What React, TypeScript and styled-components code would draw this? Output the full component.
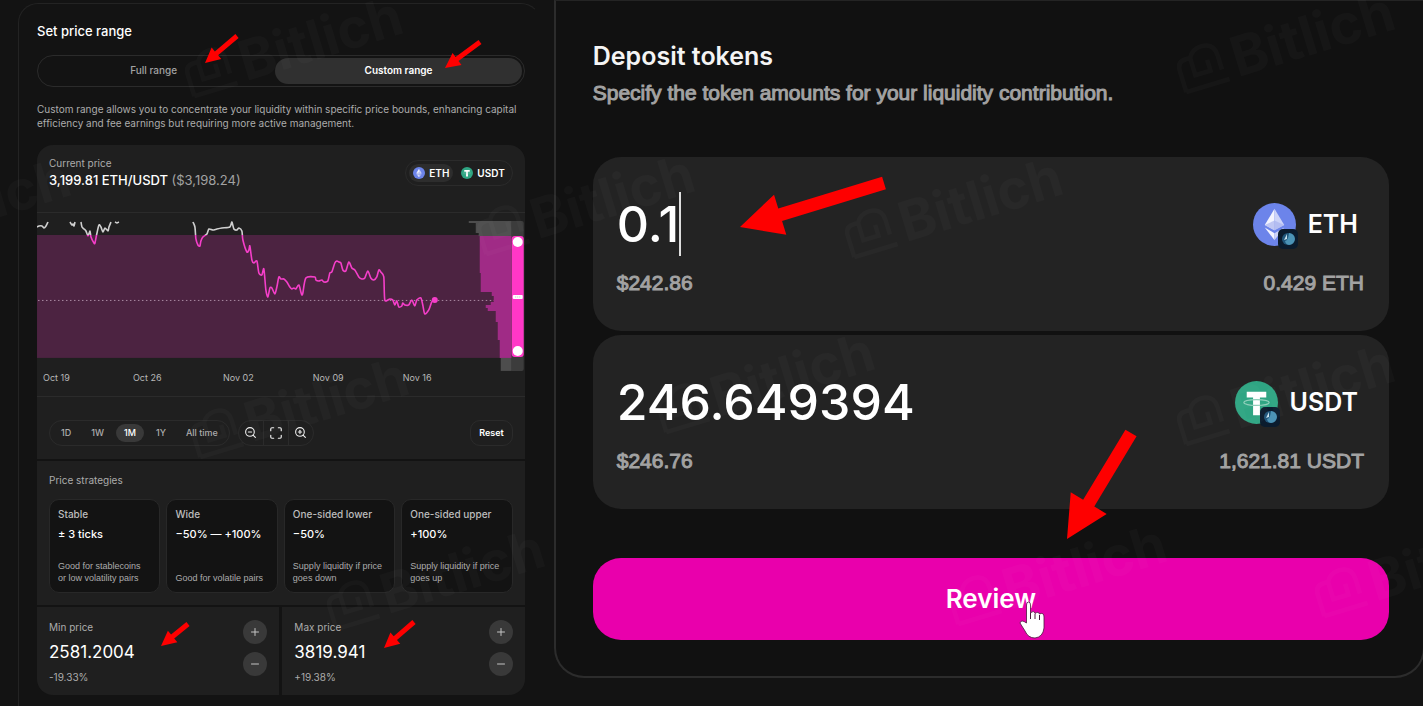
import React, { useState } from "react";
import styled, { createGlobalStyle, css } from "styled-components";
import { Maximize, Minus, Plus, ZoomIn, ZoomOut } from "lucide-react";

const GlobalStyle = createGlobalStyle`
  *, *::before, *::after { box-sizing: border-box; }
  body {
    margin: 0;
    background: #131313;
    color: #fff;
    font-family: Inter, "Liberation Sans", sans-serif;
    font-size: 10px;
  }
  button, input { font: inherit; color: inherit; margin: 0; padding: 0; border: 0; background: none; }
  button { cursor: pointer; }
  input { outline: none; min-width: 0; }
  h2, p { margin: 0; }
`;

const muted = "#a2a2a2";
const hairline = "#2b2b2b";

const Page = styled.main`
  position: relative;
  display: grid;
  grid-template-columns: minmax(0, 38fr) minmax(0, 62fr);
  min-height: 100vh;
  overflow: hidden;
`;

/* ---------- price range ---------- */

const RangePane = styled.section`
  display: flex;
  padding: 3px 0 0 18px;
`;

const RangePanel = styled.div`
  flex: 1;
  min-width: 0;
  padding: 17px 15px 11px 18px;
  border: 1px solid #232323;
  border-right-color: transparent;
  border-bottom: 0;
  border-radius: 20px 20px 0 0;
`;

const RangeTitle = styled.h2`
  font-size: 13px;
  line-height: 20px;
  font-weight: 500;
`;

const Segmented = styled.div`
  display: grid;
  grid-template-columns: 12fr 13fr;
  gap: 8px;
  height: 32px;
  margin-top: 14px;
  padding: 2px;
  border: 1px solid ${hairline};
  border-radius: 16px;
`;

const Segment = styled.button<{ $on: boolean }>`
  padding-bottom: 2px;
  border-radius: 13px;
  font-weight: 500;
  color: ${(p) => (p.$on ? "#fff" : muted)};
  background: ${(p) => (p.$on ? "#303030" : "transparent")};
  ${(p) => p.$on && css`font-weight: 600;`}
`;

const Description = styled.p`
  margin-top: 15px;
  line-height: 14px;
  color: #acacac;
`;

const Stack = styled.div`
  display: flex;
  flex-direction: column;
  gap: 2px;
  margin-top: 15px;
  border-radius: 16px;
  overflow: hidden;
`;

const Block = styled.div`
  background: #1f1f1f;
`;

const PriceHeader = styled.div`
  display: flex;
  align-items: center;
  justify-content: space-between;
  padding: 11px 12px 23px;
  border-bottom: 1px solid ${hairline};
`;

const Label = styled.div`
  line-height: 14px;
  color: #acacac;
`;

const CurrentPrice = styled.div`
  margin-top: 1px;
  font-size: 13px;
  line-height: 18px;
  font-weight: 500;
  span { color: ${muted}; font-weight: 400; }
`;

const PillGroup = styled.div<{ $gap: number }>`
  display: flex;
  gap: ${(p) => p.$gap}px;
  height: 26px;
  padding: 3px;
  border: 1px solid ${hairline};
  border-radius: 13px;
`;

const TokenOption = styled.button<{ $on: boolean }>`
  display: flex;
  align-items: center;
  gap: 4px;
  padding: 0 4px;
  border-radius: 9px;
  font-weight: 600;
  background: ${(p) => (p.$on ? "#2d2d2d" : "transparent")};
`;

const ChartBlock = styled.div`
  border-bottom: 1px solid ${hairline};
  svg { display: block; width: 100%; height: auto; }
`;

const Axis = styled.div`
  display: grid;
  grid-template-columns: repeat(5, 1fr);
  padding: 0 32px 12px 6px;
  font-size: 9px;
  line-height: 12px;
  color: #b8b8b8;
`;

const ChartControls = styled.div`
  display: flex;
  gap: 8px;
  padding: 23px 12px 13px;
`;

const Period = styled.button<{ $on: boolean }>`
  padding: 0 8px;
  border-radius: 9px;
  font-size: 9px;
  font-weight: 500;
  color: ${(p) => (p.$on ? "#fff" : "#acacac")};
  background: ${(p) => (p.$on ? "#393939" : "transparent")};
`;

const ZoomGroup = styled.div`
  display: flex;
  height: 26px;
  border: 1px solid ${hairline};
  border-radius: 13px;
`;

const ZoomButton = styled.button`
  display: grid;
  place-items: center;
  width: 24px;
  color: #f0f0f0;
  & + & { border-left: 1px solid ${hairline}; width: 25px; }
`;

const ResetButton = styled.button`
  height: 26px;
  margin-left: auto;
  padding: 0 8px;
  border: 1px solid ${hairline};
  border-radius: 10px;
  font-size: 9px;
  font-weight: 600;
`;

const Strategies = styled(Block)`
  padding: 12px;
`;

const StrategyGrid = styled.div`
  display: grid;
  grid-template-columns: repeat(4, minmax(0, 1fr));
  gap: 6px;
  margin-top: 12px;
`;

const StrategyCard = styled.button`
  display: flex;
  flex-direction: column;
  height: 94px;
  padding: 7px 0 8px 8px;
  border: 1px solid #282828;
  border-radius: 10px;
  background: #131313;
  text-align: left;
  white-space: nowrap;
`;

const StrategyName = styled.span`
  line-height: 14px;
  font-weight: 500;
  color: #bdbdbd;
`;

const StrategyRange = styled.span`
  margin-top: 5px;
  font-size: 11px;
  line-height: 16px;
  font-weight: 500;
`;

const StrategyNote = styled.span`
  margin-top: auto;
  font-family: "Liberation Sans", sans-serif;
  font-size: 9px;
  line-height: 12px;
  color: #acacac;
  white-space: pre-line;
`;

const Bounds = styled.div`
  display: grid;
  grid-template-columns: 1fr 1fr;
  gap: 3px;
`;

const Bound = styled(Block)`
  display: flex;
  justify-content: space-between;
  padding: 13px 12px 11px;
`;

const BoundFields = styled.div`
  display: flex;
  flex-direction: column;
  gap: 6px;
  min-width: 0;
  label { line-height: 14px; color: #acacac; }
  input { width: 100%; height: 24px; font-size: 17px; line-height: 24px; }
`;

const Steppers = styled.div`
  display: flex;
  flex-direction: column;
  gap: 8px;
`;

const Stepper = styled.button`
  display: grid;
  place-items: center;
  width: 24px;
  height: 24px;
  border-radius: 50%;
  background: #393939;
  color: #c4c4c4;
`;

/* ---------- deposit ---------- */

const DepositPane = styled.section`
  padding-left: 13px;
`;

const DepositPanel = styled.div`
  margin-right: -2px;
  padding: 39px 34px 36px 37px;
  border: 2px solid #2c2c2c;
  border-top: 1px solid #242424;
  border-radius: 0 0 30px 30px;
  background: #111;
`;

const DepositTitle = styled.h2`
  font-size: 25px;
  line-height: 32px;
  font-weight: 600;
  color: #f4f4f4;
`;

const DepositHint = styled.p`
  margin-top: 8px;
  font-family: "Liberation Sans", sans-serif;
  font-size: 21px;
  line-height: 26px;
  color: ${muted};
  -webkit-text-stroke: 1px ${muted};
`;

const AmountList = styled.div`
  display: flex;
  flex-direction: column;
  gap: 4px;
  margin-top: 51px;
`;

const AmountCard = styled.div`
  display: flex;
  flex-direction: column;
  gap: 13px;
  padding: 35px 25px 34px 24px;
  border-radius: 28px;
  background: #232323;
`;

const AmountRow = styled.div`
  display: flex;
  align-items: center;
  justify-content: space-between;
`;

const AmountField = styled.label`
  display: flex;
  align-items: center;
  input {
    field-sizing: content;
    height: 64px;
    font-size: 50px;
    line-height: 64px;
    font-weight: 500;
  }
`;

const Caret = styled.span`
  width: 2px;
  height: 64px;
  background: #ddd;
`;

const Token = styled.div`
  display: flex;
  align-items: center;
  gap: 12px;
  padding-right: 6px;
  font-size: 25px;
  line-height: 32px;
  font-weight: 600;
`;

const TokenIcon = styled.span`
  position: relative;
  display: flex;
`;

const ChainBadge = styled.svg`
  position: absolute;
  right: -2px;
  bottom: -3px;
`;

const AmountMeta = styled.div`
  display: flex;
  justify-content: space-between;
  font-family: "Liberation Sans", sans-serif;
  font-size: 21px;
  line-height: 28px;
  color: ${muted};
  -webkit-text-stroke: 1px ${muted};
`;

const ReviewWrap = styled.div`
  position: relative;
  margin-top: 49px;
`;

const ReviewButton = styled.button`
  display: block;
  width: 100%;
  height: 82px;
  padding-bottom: 2px;
  border-radius: 28px;
  background: #e900ac;
  font-size: 26px;
  font-weight: 600;
`;

const Hand = styled.svg`
  position: absolute;
  left: 53.5%;
  top: 43px;
  pointer-events: none;
`;

/* ---------- overlays ---------- */

const Overlay = styled.svg`
  position: absolute;
  top: 0;
  left: 0;
  overflow: visible;
  pointer-events: none;
`;

const Watermark = styled.div<{ $x: number; $y: number }>`
  position: absolute;
  left: ${(p) => p.$x}px;
  top: ${(p) => p.$y}px;
  display: flex;
  align-items: center;
  gap: 6px;
  font-size: 55px;
  line-height: 52px;
  font-weight: 700;
  color: #fff;
  opacity: 0.018;
  transform: rotate(-17deg);
  transform-origin: 0 100%;
  pointer-events: none;
  user-select: none;
`;

type Point = [number, number];

function EthLogo({ size }: { size: number }) {
  return (
    <svg width={size} height={size} viewBox="0 0 44 44" aria-hidden="true">
      <circle cx="22" cy="22" r="22" fill="#6c84ea" />
      <path d="M22 6 L12 22.500 L22 28 Z" fill="#f3f4ff" />
      <path d="M22 6 L32 22.500 L22 28 Z" fill="#cdd4f8" />
      <path d="M12 22.500 L22 18 L32 22.500 L22 28 Z" fill="#a9b3ee" opacity=".7" />
      <path d="M12 25 L22 31 V38 Z" fill="#f3f4ff" />
      <path d="M32 25 L22 31 V38 Z" fill="#cdd4f8" />
    </svg>
  );
}

function UsdtLogo({ size }: { size: number }) {
  return (
    <svg width={size} height={size} viewBox="0 0 44 44" aria-hidden="true">
      <circle cx="22" cy="22" r="22" fill="#2fa583" />
      <path d="M12 11 H32 V17 H25.500 V35 H18.500 V17 H12 Z" fill="#fff" />
      <ellipse cx="22" cy="22" rx="13" ry="3" fill="none" stroke="#8fcfba" strokeWidth="1.200" />
    </svg>
  );
}

function Chain() {
  return (
    <ChainBadge width="20" height="20" viewBox="0 0 20 20" aria-hidden="true">
      <rect width="20" height="20" rx="5" fill="#0b1c2e" />
      <circle cx="10" cy="10" r="6" fill="#20567a" />
      <path d="M11 4 A6 6 0 0 1 11 16 A5 5 0 0 1 7 12 Q10 12 11 4 Z" fill="#4b93b6" />
      <path d="M9 5 V10 L6 11 Z" fill="#c5e0ec" />
    </ChainBadge>
  );
}

const series: Point[][] = [
  [[0, 14], [2, 13], [5, 13], [7, 15], [9, 13], [11, 9]],
  [[33, 9], [35, 12], [36, 11], [37, 13], [38, 9]],
  [[44, 9], [45, 14], [47, 16], [49, 18], [51, 23], [53, 18], [54, 24], [57, 30], [58, 30], [60, 20], [62, 12], [64, 14], [66, 19], [68, 15], [71, 18], [72, 14], [74, 9]],
  [[78, 9], [80, 10], [82, 9]],
  [
    [156, 9], [158, 14], [159, 26], [161, 32], [163, 33], [164, 28], [166, 24], [170, 21], [172, 16], [176, 17], [180, 16], [185, 15], [193, 14], [195, 9], [197, 16], [200, 17], [202, 15], [205, 18], [206, 27], [210, 39], [212, 37], [213, 33], [215, 47], [217, 50], [220, 48], [222, 60], [225, 62], [227, 56], [229, 77], [231, 84], [233, 75], [235, 75], [238, 81], [240, 74], [242, 64], [244, 66], [247, 66], [250, 69],
    [253, 74], [255, 76], [257, 75], [259, 76], [262, 72], [264, 79], [265, 82], [266, 80], [269, 65], [278, 64], [279, 67], [282, 68], [285, 67], [287, 69], [291, 68], [293, 60], [295, 59], [298, 50], [300, 48], [302, 49], [304, 50], [306, 57], [309, 58], [312, 49], [315, 55], [318, 57], [322, 64], [325, 66], [328, 65], [331, 58], [334, 65], [337, 67], [340, 64], [342, 57], [344, 59], [347, 64], [348, 87], [353, 86], [356, 87], [358, 92], [360, 88], [362, 94], [365, 93], [366, 90], [368, 92], [372, 92], [375, 87], [378, 93], [380, 87], [384, 85], [386, 92], [388, 101], [392, 97], [395, 89], [398, 87],
  ],
];

/** Smooth curve through every point, with short tangents so that peaks stay sharp. */
function curve(points: Point[]): string {
  const at = (i: number) => points[Math.max(0, Math.min(points.length - 1, i))];
  return points
    .map(([x, y], i) => {
      if (i === 0) return `M${x} ${y}`;
      const [ax, ay] = at(i - 2);
      const [bx, by] = at(i - 1);
      const [dx, dy] = at(i + 1);
      return `C${bx + (x - ax) / 8} ${by + (y - ay) / 8} ${x - (dx - bx) / 8} ${y - (dy - by) / 8} ${x} ${y}`;
    })
    .join(" ");
}

function PriceChart() {
  return (
    <svg viewBox="0 0 488 159" role="img" aria-label="ETH/USDT price, last month">
      <defs>
        <linearGradient id="inRange" gradientUnits="userSpaceOnUse" x1="0" y1="0" x2="0" y2="159">
          <stop offset="0.138" stopColor="#cfcfcf" />
          <stop offset="0.138" stopColor="#f53ec9" />
        </linearGradient>
      </defs>
      <rect y="22" width="475" height="123" fill="#4c2341" />
      <line x1="1" x2="474" y1="87.500" y2="87.500" stroke="#a98aa2" strokeDasharray="1.500 2.500" />
      <path d="M432 8 H475 V23 H442 V20 H439 V10 H432 Z" fill="#4d4d4d" />
      <path d="M443 23 H475 V145 H463 V127 H461 V109 H459 V98 H451 V95 H449 V92 H454 V89 H457 V83 H455 V79 H444 V60 H443 Z" fill="#a02b86" />
      <rect x="464" y="145" width="11" height="13" fill="#4d4d4d" />
      <path d="M475 8 H485 Q487 8 487 10 V156 Q487 158 485 158 H475 Z" fill="#3c3c3c" />
      <rect x="475" y="23" width="12" height="121" rx="3" fill="#ff37c7" />
      <circle cx="481" cy="29" r="5" fill="#fff" />
      <circle cx="481" cy="138" r="5" fill="#fff" />
      <rect x="476" y="82" width="10" height="4" rx="1" fill="#fff" />
      <path d="M479 83 V85 M481 83 V85 M483 83 V85" stroke="#ccc" strokeWidth=".6" />
      {series.map((points, i) => (
        <path key={i} d={curve(points)} fill="none" stroke="url(#inRange)" strokeWidth="1.600" strokeLinejoin="round" />
      ))}
      <circle cx="398" cy="87" r="3" fill="#f53ec9" />
    </svg>
  );
}

type ArrowProps = { tip: Point; tail: Point; head: number; shaft: number };

function Arrow({ tip, tail, head, shaft }: ArrowProps) {
  const length = Math.hypot(tip[0] - tail[0], tip[1] - tail[1]);
  const u: Point = [(tip[0] - tail[0]) / length, (tip[1] - tail[1]) / length];
  const at = (along: number, side: number) =>
    `${tip[0] - u[0] * along - u[1] * side},${tip[1] - u[1] * along + u[0] * side}`;
  const points = [
    at(0, 0), at(head, head / 2), at(head, shaft / 2), at(length, shaft / 2),
    at(length, -shaft / 2), at(head, -shaft / 2), at(head, -head / 2),
  ];
  return <polygon points={points.join(" ")} fill="#fe0000" />;
}

const arrows: ArrowProps[] = [
  { tip: [205, 63], tail: [237, 36], head: 15, shaft: 5 },
  { tip: [445, 68], tail: [480, 42], head: 15, shaft: 5 },
  { tip: [161, 646], tail: [188, 624], head: 15, shaft: 5 },
  { tip: [384, 648], tail: [414, 622], head: 15, shaft: 5 },
  { tip: [740, 227], tail: [884, 183], head: 42, shaft: 13 },
  { tip: [1067, 539], tail: [1131, 433], head: 42, shaft: 13 },
];

const watermarks: Point[] = [
  [192, 52], [1184, 48], [-140, 214], [484, 210], [852, 213], [198, 413],
  [664, 388], [1184, 400], [334, 585], [956, 580], [1322, 572],
];

const periods = ["1D", "1W", "1M", "1Y", "All time"];

const strategies = [
  { name: "Stable", range: "± 3 ticks", note: "Good for stablecoins\nor low volatility pairs" },
  { name: "Wide", range: "−50% — +100%", note: "Good for volatile pairs" },
  { name: "One-sided lower", range: "−50%", note: "Supply liquidity if price\ngoes down" },
  { name: "One-sided upper", range: "+100%", note: "Supply liquidity if price\ngoes up" },
];

function BoundEditor({ id, label, initial, change }: { id: string; label: string; initial: string; change: string }) {
  const [value, setValue] = useState(initial);
  const step = (by: number) => setValue(String(Number((Number(value) + by).toFixed(4))));
  return (
    <Bound>
      <BoundFields>
        <label htmlFor={id}>{label}</label>
        <input id={id} value={value} onChange={(e) => setValue(e.target.value)} />
        <Label>{change}</Label>
      </BoundFields>
      <Steppers>
        <Stepper type="button" aria-label={`Increase ${label}`} onClick={() => step(1)}>
          <Plus size={12} strokeWidth={2} />
        </Stepper>
        <Stepper type="button" aria-label={`Decrease ${label}`} onClick={() => step(-1)}>
          <Minus size={12} strokeWidth={2} />
        </Stepper>
      </Steppers>
    </Bound>
  );
}

type AmountProps = { symbol: string; initial: string; fiat: string; balance: string; active?: boolean; logo: React.ReactNode };

function AmountEditor({ symbol, initial, fiat, balance, active, logo }: AmountProps) {
  const [value, setValue] = useState(initial);
  return (
    <AmountCard>
      <AmountRow>
        <AmountField>
          <input aria-label={`${symbol} amount`} value={value} onChange={(e) => setValue(e.target.value)} />
          {active && <Caret />}
        </AmountField>
        <Token>
          <TokenIcon>
            {logo}
            <Chain />
          </TokenIcon>
          {symbol}
        </Token>
      </AmountRow>
      <AmountMeta>
        <span>{fiat}</span>
        <span>{balance}</span>
      </AmountMeta>
    </AmountCard>
  );
}

export default function App() {
  const [mode, setMode] = useState("Custom range");
  const [quote, setQuote] = useState("ETH");
  const [period, setPeriod] = useState("1M");

  return (
    <>
      <GlobalStyle />
      <Page>
        <RangePane>
          <RangePanel>
            <RangeTitle>Set price range</RangeTitle>
            <Segmented>
              {["Full range", "Custom range"].map((m) => (
                <Segment key={m} type="button" $on={m === mode} aria-pressed={m === mode} onClick={() => setMode(m)}>
                  {m}
                </Segment>
              ))}
            </Segmented>
            <Description>
              Custom range allows you to concentrate your liquidity within specific price bounds, enhancing capital
              efficiency and fee earnings but requiring more active management.
            </Description>
            <Stack>
              <Block>
                <PriceHeader>
                  <div>
                    <Label>Current price</Label>
                    <CurrentPrice>
                      3,199.81 ETH/USDT <span>($3,198.24)</span>
                    </CurrentPrice>
                  </div>
                  <PillGroup $gap={4}>
                    <TokenOption type="button" $on={quote === "ETH"} aria-pressed={quote === "ETH"} onClick={() => setQuote("ETH")}>
                      <EthLogo size={12} />
                      ETH
                    </TokenOption>
                    <TokenOption type="button" $on={quote === "USDT"} aria-pressed={quote === "USDT"} onClick={() => setQuote("USDT")}>
                      <UsdtLogo size={12} />
                      USDT
                    </TokenOption>
                  </PillGroup>
                </PriceHeader>
                <ChartBlock>
                  <PriceChart />
                  <Axis>
                    <span>Oct 19</span>
                    <span>Oct 26</span>
                    <span>Nov 02</span>
                    <span>Nov 09</span>
                    <span>Nov 16</span>
                  </Axis>
                </ChartBlock>
                <ChartControls>
                  <PillGroup $gap={4}>
                    {periods.map((p) => (
                      <Period key={p} type="button" $on={p === period} aria-pressed={p === period} onClick={() => setPeriod(p)}>
                        {p}
                      </Period>
                    ))}
                  </PillGroup>
                  <ZoomGroup>
                    <ZoomButton type="button" aria-label="Zoom out"><ZoomOut size={13} /></ZoomButton>
                    <ZoomButton type="button" aria-label="Fit"><Maximize size={14} /></ZoomButton>
                    <ZoomButton type="button" aria-label="Zoom in"><ZoomIn size={13} /></ZoomButton>
                  </ZoomGroup>
                  <ResetButton type="button">Reset</ResetButton>
                </ChartControls>
              </Block>
              <Strategies>
                <Label>Price strategies</Label>
                <StrategyGrid>
                  {strategies.map((s) => (
                    <StrategyCard key={s.name} type="button">
                      <StrategyName>{s.name}</StrategyName>
                      <StrategyRange>{s.range}</StrategyRange>
                      <StrategyNote>{s.note}</StrategyNote>
                    </StrategyCard>
                  ))}
                </StrategyGrid>
              </Strategies>
              <Bounds>
                <BoundEditor id="min-price" label="Min price" initial="2581.2004" change="-19.33%" />
                <BoundEditor id="max-price" label="Max price" initial="3819.941" change="+19.38%" />
              </Bounds>
            </Stack>
          </RangePanel>
        </RangePane>

        <DepositPane>
          <DepositPanel>
            <DepositTitle>Deposit tokens</DepositTitle>
            <DepositHint>Specify the token amounts for your liquidity contribution.</DepositHint>
            <AmountList>
              <AmountEditor symbol="ETH" initial="0.1" fiat="$242.86" balance="0.429 ETH" active logo={<EthLogo size={43} />} />
              <AmountEditor symbol="USDT" initial="246.649394" fiat="$246.76" balance="1,621.81 USDT" logo={<UsdtLogo size={43} />} />
            </AmountList>
            <ReviewWrap>
              <ReviewButton type="button">Review</ReviewButton>
              <Hand width="26" height="38" viewBox="0 0 26 38" aria-hidden="true">
                <path
                  d="M7.500 4 Q7.500 1 9.500 1 Q11.500 1 11.500 4 V12 Q15 9 16 12.500 Q19.500 10 20.500 13 Q25 11 25 16 V27 Q24 36 16 37 Q9 37 6 30 L1 22 Q2 18 7.500 22 Z"
                  fill="#fff"
                  stroke="#4a1a3c"
                  strokeWidth=".8"
                />
                <path d="M11.500 12 V18 M16 13 V18 M20.500 14 V19" stroke="#4a1a3c" strokeWidth="1" />
              </Hand>
            </ReviewWrap>
          </DepositPanel>
        </DepositPane>

        {watermarks.map(([x, y]) => (
          <Watermark key={`${x},${y}`} $x={x} $y={y} aria-hidden="true">
            <svg width="52" height="48" viewBox="0 0 46 42" fill="none" stroke="currentColor" strokeWidth="4">
              <path d="M4 38 V18 Q4 10 12 10 H16 Q20 3 28 3 Q40 3 40 15 V28 M16 10 V26 H30 V16 M4 38 H44" />
            </svg>
            Bitlich
          </Watermark>
        ))}
        <Overlay width="1" height="1" aria-hidden="true">
          {arrows.map((a) => (
            <Arrow key={a.tip.join()} {...a} />
          ))}
        </Overlay>
      </Page>
    </>
  );
}
